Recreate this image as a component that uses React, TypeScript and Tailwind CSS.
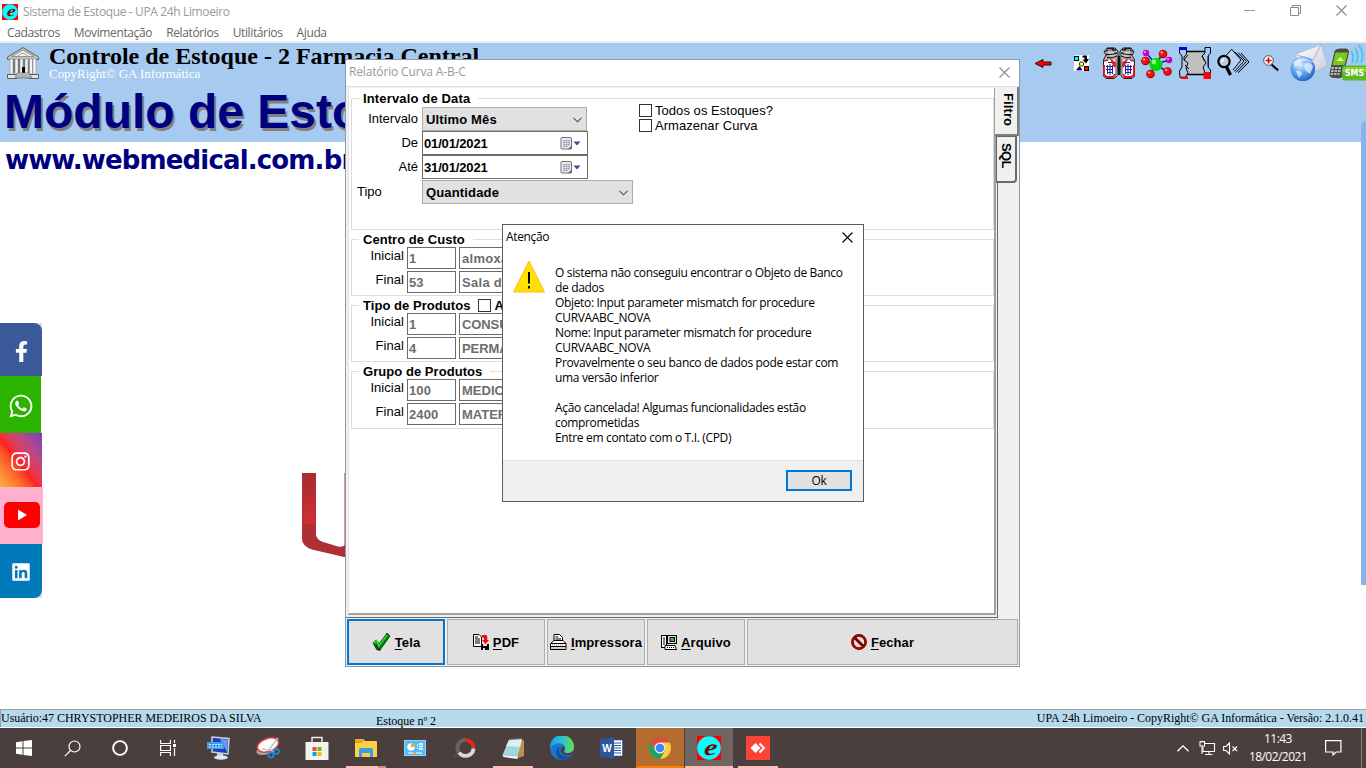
import type { ReactNode } from "react";
import { FaFacebookF, FaWhatsapp, FaInstagram, FaLinkedin } from "react-icons/fa";

const ui = "font-['Open_Sans','Noto_Sans',sans-serif]";
const arial = "font-['Liberation_Sans',Arial,sans-serif]";
const serif = "font-['Liberation_Serif','Times_New_Roman',serif]";

function ELogo({ className }: { className: string }) {
  return (
    <svg className={className} viewBox="0 0 24 24">
      <rect width="24" height="24" fill="#ff0000" />
      <circle cx="12" cy="12" r="11.8" fill="#00ffff" />
      <g transform="translate(12 18.5) skewX(-8) scale(1.45 1.15)">
        <text x="0.6" y="0" textAnchor="middle" fontSize="20" fontWeight="bold" fontStyle="italic" fontFamily="Liberation Serif, serif" fill="#800000">e</text>
      </g>
    </svg>
  );
}

function CloseX({ className, size }: { className: string; size: number }) {
  return (
    <svg className={className} width={size} height={size} viewBox="0 0 11 11" fill="none" stroke="currentColor" strokeWidth="1.1">
      <path d="M0.5 0.5 10.5 10.5M10.5 0.5 0.5 10.5" />
    </svg>
  );
}

function Tool({ children }: { children: ReactNode }) {
  return <svg className="h-10 w-[38px] shrink-0" viewBox="0 0 38 40">{children}</svg>;
}

function Can() {
  return (
    <g fill="none">
      <path d="M7 5H15L18 8V14L17 33 14 35.500H6L3.500 33V17L6 12 4 9Z" fill="#b4b4b4" stroke="#202020" />
      <path d="M7 5.500H14M5 8.500 9 7H16M6 11.500H10L17 10M7 14.500H12L17 13" stroke="#202020" strokeWidth="1.300" />
      <path d="M8 7H12M8 10H14M9 13H14" stroke="#f4f4f4" strokeWidth="0.9" />
      <path d="M4 17H15V33H4Z" fill="#ffffff" />
      <path d="M4 18 8 17M12 18 15 24V20ZM4 22V32L7 34H13L15 31" stroke="#e81010" strokeWidth="1.800" />
      <ellipse cx="9.500" cy="26" rx="4" ry="5" fill="#ffffff" />
      <path d="M8 19.500H12M6 23.500H13M6 26.500H13M7 29.500H13M7.500 22V31M10 21V32M12.500 22V31" stroke="#20209c" strokeWidth="1" />
      <path d="M16.500 16V33" stroke="#8a8a8a" strokeWidth="1.600" />
    </g>
  );
}

function Toolbar() {
  return (
    <div className="ml-auto flex">
      <Tool>
        <path d="M11 20.5 19 16.5V19H27V22H19V24.5Z" fill="#ff0000" stroke="#400000" strokeWidth="1" />
      </Tool>
      <Tool>
        <rect x="12" y="12" width="15" height="16" fill="#ffffff" />
        <rect x="11" y="11" width="7" height="8" fill="#a6caf0" opacity="0.4" />
        <rect x="12.5" y="13.5" width="4" height="4" fill="#00ffff" stroke="#000" />
        <path d="M21 12.500H25V16H27L24 20.500 20.500 16.500H22.500V14.500H20Z" fill="#000" />
        <circle cx="19.5" cy="21" r="2.2" fill="#ffff00" stroke="#000" strokeWidth="0.8" />
        <path d="M14.500 27 17.500 23.500 20 27Z" fill="#0000c0" stroke="#000" strokeWidth="0.7" />
        <rect x="22.5" y="23.5" width="4" height="4" fill="#ff0000" stroke="#000" />
      </Tool>
      <Tool>
        <Can />
        <g transform="translate(38 0) scale(-1 1)"><Can /></g>
        <path d="M19 13V32" stroke="#000" strokeWidth="1.800" />
      </Tool>
      <Tool>
        <path d="M18 21 8 10M18 21 7 18M18 21 25 10M18 21 31 17M18 21 12 31M18 21 29 29" stroke="#2020b0" strokeWidth="1.600" />
        <circle cx="18" cy="21.5" r="6.5" fill="#00d800" /><circle cx="16" cy="19" r="2.4" fill="#80ff80" />
        <circle cx="8" cy="10" r="3.2" fill="#c800c8" /><circle cx="7" cy="9" r="1" fill="#ffa0ff" />
        <circle cx="31" cy="17" r="3.2" fill="#c800c8" /><circle cx="30" cy="16" r="1" fill="#ffa0ff" />
        {[[7.5, 18], [25, 11], [12.5, 31], [29.5, 28.5]].map(([x, y]) => (
          <g key={x}>
            <circle cx={x} cy={y} r="4.3" fill="#a00000" />
            <circle cx={x - 0.3} cy={y - 0.3} r="3.5" fill="#f01010" />
            <circle cx={x - 1.3} cy={y - 1.5} r="1.1" fill="#ffc0c0" />
          </g>
        ))}
      </Tool>
      <Tool>
        <path d="M7 8.500H32V31.500H7Z" fill="#c0c0c0" stroke="#000" strokeWidth="1.4" />
        <path d="M3.500 7V4.500H10.500V11L8 14V17L12 20 10 25 12 30 9 34.500H4L3.500 28 6 24V13L3.500 10Z" fill="#a6caf0" stroke="#000" strokeWidth="1" />
        <path d="M34.500 4.500H29V10L26 13 28 17 30 20 27 24 29 30H34.500V27L32 24V13L34.500 10Z" fill="#a6caf0" stroke="#000" strokeWidth="1" />
        <path d="M8 17 12 12M9 22 13 26M26 13 29 18" stroke="#000" strokeWidth="1" />
        <rect x="3" y="4" width="8" height="3" fill="#0000e0" />
        <rect x="5" y="33.500" width="7" height="2.500" fill="#ff0000" />
        <rect x="27.500" y="29.500" width="7.500" height="6.500" fill="#ff0000" />
      </Tool>
      <Tool>
        <g fill="none" stroke="#000" strokeWidth="1">
          <path d="M12 12.500 17.700 6.300 27 17 19 27" fill="#b8d4f2" />
          <path d="M21 9 30 18 20.500 28.500" />
          <path d="M24 9.500 32.500 18.500 22 29.500" />
          <path d="M27 10 35 19 24 29.800" />
        </g>
        <circle cx="10" cy="18.500" r="5.600" fill="#b9cde0" stroke="#000" strokeWidth="2.2" />
        <path d="M7 19 10 16" stroke="#fff" strokeWidth="1.3" />
        <path d="M12.500 24 16.500 32" stroke="#000" strokeWidth="3.2" />
      </Tool>
      <Tool>
        <path d="M19 21.500 26 27.500" stroke="#000" strokeWidth="2.4" />
        <path d="M18 22 25 28" stroke="#e0e0e0" strokeWidth="0.8" />
        <circle cx="16.500" cy="17.500" r="4.800" fill="#ffffff" stroke="#505050" strokeWidth="1" />
        <path d="M16.500 14.500V20.500M13.500 17.500H19.500" stroke="#e00000" strokeWidth="1.7" />
      </Tool>
      <Tool>
        <defs>
          <radialGradient id="globe" cx="0.4" cy="0.35" r="0.7"><stop offset="0" stopColor="#d9ecff" /><stop offset="0.55" stopColor="#5b9fec" /><stop offset="1" stopColor="#1c5cc0" /></radialGradient>
          <linearGradient id="mail" x1="0" y1="0" x2="1" y2="1"><stop offset="0" stopColor="#ffffff" /><stop offset="1" stopColor="#c9c9da" /></linearGradient>
        </defs>
        <path d="M5 11.500 31 1.500 37.500 23 17 32Z" fill="url(#mail)" stroke="#b8bccb" strokeWidth="0.7" />
        <path d="M5 11.500 23.500 17 31 1.500" fill="none" stroke="#a9adc0" strokeWidth="0.9" />
        <circle cx="12.800" cy="25.700" r="12.300" fill="url(#globe)" />
        <path d="M3 20Q7 16 12 18L10 22 5 24ZM15 20Q22 18 23 24L20 31 16 28 14 24ZM6 28Q10 27 12 31L9 35Z" fill="#e6f2ff" opacity="0.75" />
        <path d="M2.500 20Q12 9 23.500 20Q12 16 2.500 20" fill="#fff" opacity="0.5" />
      </Tool>
      <Tool>
        <path d="M23 8Q27 13 24 20M27 5Q32 13 28 20M31 2Q37 12 33 20" stroke="#3fc5e8" strokeWidth="1.700" fill="none" />
        <path d="M6 8Q7 5.500 11 5H18Q22 6 21.500 10L16 32Q14 36.500 10 36L3 35Q0 33 1 30Z" fill="#4a4d50" stroke="#e3e6e8" strokeWidth="0.8" />
        <path d="M7.500 9.500H20L16.500 22H4.500Z" fill="#7cc81e" /><path d="M8.500 18 12.500 14 15.500 18Z" fill="#e0ffb0" />
        <path d="M3.500 25H13.500M3 28H12.500M2.500 31H11.500" stroke="#dedede" strokeWidth="1.6" strokeDasharray="2.5 1" />
        <rect x="14" y="22.500" width="28" height="15" rx="3" fill="#5cb81f" />
        <path d="M15 26Q16 24 18 24H38V29H15Z" fill="#85d43e" />
        <text x="17" y="33" fontSize="8.500" fontWeight="bold" fontFamily="DejaVu Sans, sans-serif" fill="#fff" textLength="19" lengthAdjust="spacingAndGlyphs">SMS</text>
      </Tool>
    </div>
  );
}

function Temple() {
  return (
    <svg className="mt-1 ml-[7px] h-8 w-8 shrink-0" viewBox="0 0 32 32">
      <path d="M.5 10 16 .5 31.500 10V12.500H.5Z" fill="#c0c0c0" stroke="#606060" strokeWidth="1" />
      <path d="M5 9.500 16 3 27 9.500Z" fill="#efefef" stroke="#808080" strokeWidth="0.8" />
      <path d="M11 9Q16 4 21 9" stroke="#505050" fill="none" strokeDasharray="1 1" />
      <rect x="3" y="13" width="26" height="13" fill="#707070" />
      {[3, 8, 13, 18, 22.5, 26].map((x) => <rect key={x} x={x} y="12" width="3" height="15" fill="#f4f4f4" stroke="#909090" strokeWidth="0.6" />)}
      <path d="M15 20H18V26H15Z" fill="#000" />
      <path d="M.5 27.500H10V31.500H.5ZM22 27.500H31.500V31.500H22Z" fill="#e4e4e4" stroke="#404040" strokeWidth="0.8" />
      <path d="M10 26H22L25 31H8Z" fill="#d8d8d8" stroke="#707070" strokeWidth="0.7" />
      <path d="M9 28H23M9 30H24" stroke="#606060" strokeWidth="0.6" />
    </svg>
  );
}

function Group({ title, height, tracking, extra, children }: { title: string; height: string; tracking: string; extra?: ReactNode; children: ReactNode }) {
  return (
    <fieldset className={`mb-px w-[643px] border border-[#dcdcdc] ${height}`}>
      <legend className={`ml-[7px] flex h-4 items-center pt-px pr-2 pl-1 text-[13px] leading-4 font-bold whitespace-nowrap ${tracking}`}>
        {title}
        {extra}
      </legend>
      {children}
    </fieldset>
  );
}

function Range({ label, code, name, tracking = "" }: { label: string; code: string; name: string; tracking?: string }) {
  return (
    <div className="mb-0.5 flex h-[22px]">
      <span className="mr-[3px] w-[52px] text-right text-[13px] leading-[18px] tracking-[0.05px]">{label}</span>
      <span className="mr-[3px] w-[49px] border border-[#6b6b6b] pl-px text-[13px] leading-[21px] font-bold tracking-[0.1px] text-[#6d6d6d]">{code}</span>
      <span className={`w-[230px] border border-[#6b6b6b] pl-[2px] text-[13px] leading-[21px] font-bold text-[#6d6d6d] ${tracking}`}>{name}</span>
    </div>
  );
}

function Select({ value, width }: { value: string; width: string }) {
  return (
    <div className={`flex h-6 items-center justify-between border border-[#adadad] bg-[#e1e1e1] pt-px pr-1 pl-[3px] text-[13px] font-bold tracking-[0.15px] ${width}`}>
      {value}
      <svg width="9" height="6" viewBox="0 0 9 6" fill="none" stroke="#505050" strokeWidth="1.1"><path d="M.5 .8 4.5 4.8 8.500 .8" /></svg>
    </div>
  );
}

function DateBox({ value }: { value: string }) {
  return (
    <div className="flex h-6 w-[166px] items-center border border-[#6e6e6e] bg-white pl-px text-[13px] font-bold tracking-[-0.15px]">
      <span className="flex-1 pt-0.5">{value}</span>
      <svg className="mr-[6px]" width="21" height="13" viewBox="0 0 21 13">
        <rect x="1" y=".5" width="10.500" height="11.500" rx="1" fill="#e8eaf0" stroke="#746a70" />
        <path d="M3 3.500H10M3 5.500H10M3 7.500H10M3 9.500H8M4 3V10M6.500 3V10M9 3V9" stroke="#9aa3b8" strokeWidth=".8" />
        <path d="M8 12 11.500 9V12Z" fill="#6b5560" />
        <path d="M13.500 4.500H20.500L17 8.500Z" fill="#34508c" />
      </svg>
    </div>
  );
}

function Row({ label, align = "text-right pr-1", children }: { label: string; align?: string; children: ReactNode }) {
  return (
    <div className="flex h-6">
      <span className={`w-[70px] text-[13px] leading-[24px] ${align}`}>{label}</span>
      {children}
    </div>
  );
}

function Check({ label }: { label: string }) {
  return (
    <div className="flex h-[15px] items-center gap-[3px] text-[13px] tracking-[0.05px] whitespace-nowrap">
      <span className="h-[13px] w-[13px] border border-[#333] bg-white" />
      <span className="pt-px">{label}</span>
    </div>
  );
}

function ActionButton({ letter, rest, icon, width, focus = false }: { letter: string; rest: string; icon: ReactNode; width: string; focus?: boolean }) {
  return (
    <button className={`flex h-[46px] items-center justify-center gap-1 bg-[#e1e1e1] text-[13px] font-bold tracking-[0.1px] ${focus ? "border-2 border-[#0078d7]" : "border border-[#adadad]"} ${width}`}>
      {icon}
      <span className="pt-px"><span className="underline underline-offset-2">{letter}</span>{rest}</span>
    </button>
  );
}

function ReportWindow() {
  return (
    <div className={`absolute top-[59px] left-[345px] flex h-[608px] w-[675px] flex-col border border-[#8c9aa8] bg-[#f0f0f0] ${arial} text-black`}>
      <div className={`flex h-[26px] shrink-0 items-center justify-between bg-white pr-[9px] pl-[3px] text-[12px] tracking-[-0.15px] text-[#999] ${ui}`}>
        <span className="-mt-0.5">Relatório Curva A-B-C</span>
        <CloseX size={11} className="-mt-0.5 text-[#8a8a8a]" />
      </div>
      <div className="flex h-[532px] shrink-0 border-t border-[#e0e0e0]">
        <div className="flex w-[652px] flex-col border-r border-b border-[#696969] pt-px pr-px pb-[2px] pl-[2px]">
          <div className="flex-1 border-r-2 border-b-2 border-l border-r-[#a0a0a0] border-b-[#a0a0a0] border-l-[#e3e3e3] bg-white pt-[2px] pl-[2px]">
            <Group title="Intervalo de Data" height="h-[140px]" tracking="tracking-[0.15px]">
              <div className="flex pt-px">
                <div>
                  <Row label="Intervalo"><Select value="Ultimo Mês" width="w-[165px]" /></Row>
                  <Row label="De"><DateBox value="01/01/2021" /></Row>
                  <Row label="Até"><DateBox value="31/01/2021" /></Row>
                  <div className="pt-px"><Row label="Tipo" align="pl-[5px]"><Select value="Quantidade" width="w-[211px]" /></Row></div>
                </div>
                <div className="-mt-[4px] ml-[6px]">
                  <Check label="Todos os Estoques?" />
                  <Check label="Armazenar Curva" />
                </div>
              </div>
            </Group>
            <Group title="Centro de Custo" height="h-[65px]" tracking="tracking-[0.05px]">
              <Range label="Inicial" code="1" name="almoxarifado" tracking="tracking-[0.3px]" />
              <Range label="Final" code="53" name="Sala de Vacina" tracking="tracking-[0.3px]" />
            </Group>
            <Group title="Tipo de Produtos" height="h-[65px]" tracking="tracking-[0.05px]" extra={<><span className="mr-[3px] ml-2 h-[13px] w-[13px] border border-[#333] bg-white" />Ativos</>}>
              <Range label="Inicial" code="1" name="CONSUMO" tracking="tracking-[-0.1px]" />
              <Range label="Final" code="4" name="PERMANENTE" tracking="tracking-[-0.1px]" />
            </Group>
            <Group title="Grupo de Produtos" height="h-[66px]" tracking="tracking-[0.05px]">
              <Range label="Inicial" code="100" name="MEDICAMENTOS" />
              <Range label="Final" code="2400" name="MATERIAL" />
            </Group>
          </div>
        </div>
        <div className="flex flex-1 flex-col items-start text-[13px] font-bold">
          <div className="-ml-[3px] h-[49px] w-6 border-r-2 border-b-2 border-[#808080] bg-[#f0f0f0] pt-[6px] leading-[18px] tracking-[0.1px] [writing-mode:vertical-rl]">Filtro</div>
          <div className="-ml-[2px] h-[47px] w-[21px] rounded-br-sm border-t border-r-2 border-b-2 border-l border-[#696969] bg-[#f0f0f0] pt-[6px] leading-[17px] tracking-[-0.6px] [writing-mode:vertical-rl]">SQL</div>
        </div>
      </div>
      <div className="flex gap-0.5 pt-px pl-px">
        <ActionButton letter="T" rest="ela" width="w-[98px]" focus icon={
          <svg width="19" height="20" viewBox="0 0 19 20"><path d="M1 11 4 8 7 12 15 1 18 4 8 18H5Z" fill="#008000" stroke="#003000" strokeWidth="0.8" /><path d="M2 11 4.500 9 7 14 15 3" stroke="#30d030" strokeWidth="1.8" fill="none" /><path d="M4 13 7 18 8.500 18" stroke="#000080" fill="none" /></svg>} />
        <ActionButton letter="P" rest="DF" width="w-[98px]" icon={
          <svg width="16" height="16" viewBox="0 0 16 16"><path d="M.5 .5H6L8.500 3V12.500H.5Z" fill="#fff" stroke="#000" /><path d="M2 3H5M2 5H7M2 7H7M2 9H7" stroke="#000" /><path d="M9 1H13Q15 2 14 6H16L12.500 10 9 6H11Q12 4 9 3Z" fill="#ff0000" /><path d="M8 10H16V16H8Z" fill="#000" /><path d="M10 10H14V12H10ZM10 14H12V16H10Z" fill="#ddd" /></svg>} />
        <ActionButton letter="I" rest="mpressora" width="w-[98px]" icon={
          <svg width="17" height="16" viewBox="0 0 17 16"><path d="M4 7V.5H9.500L12.500 3.500V7" fill="#fff" stroke="#000" /><path d="M5.500 3H8M5.500 5H11" stroke="#000" /><path d="M4 6.500H13L16 9.500V15.500H.5V9.500Z" fill="#fff" stroke="#000" /><path d="M1 9.500H16M1 12.500H16" stroke="#000" /><path d="M2 11H14" stroke="#ff7070" strokeDasharray="1 1" /><path d="M1 14H16" stroke="#a0a0a0" /></svg>} />
        <ActionButton letter="A" rest="rquivo" width="w-[98px]" icon={
          <svg width="16" height="15" viewBox="0 0 16 15"><rect x=".5" y=".5" width="5" height="12" fill="#fff" stroke="#000" /><path d="M2 3H4M2 5H4M2 7H4M2 9H4" stroke="#000" /><rect x="6.500" y=".5" width="9" height="8" fill="#e0e0e0" stroke="#000" /><rect x="9" y="2.500" width="4.500" height="4" fill="#30c030" stroke="#000" /><path d="M4 10.500H14L15.500 14.500H4Z" fill="#fff" stroke="#000" /><path d="M6 12.500H14" stroke="#000" strokeDasharray="1 1" /></svg>} />
        <ActionButton letter="F" rest="echar" width="w-[271px]" icon={
          <svg width="16" height="16" viewBox="0 0 16 16" fill="none"><circle cx="8" cy="8" r="6.600" stroke="#600000" strokeWidth="2.700" /><circle cx="8" cy="8" r="6.400" stroke="#c00000" strokeWidth="1.400" /><path d="M3.500 3.500 12.500 12.500" stroke="#800000" strokeWidth="2.800" /></svg>} />
      </div>
    </div>
  );
}

const message = [
  "O sistema não conseguiu encontrar o Objeto de Banco",
  "de dados",
  "Objeto: Input parameter mismatch for procedure",
  "CURVAABC_NOVA",
  "Nome: Input parameter mismatch for procedure",
  "CURVAABC_NOVA",
  "Provavelmente o seu banco de dados pode estar com",
  "uma versão inferior",
  "",
  "Ação cancelada! Algumas funcionalidades estão",
  "comprometidas",
  "Entre em contato com o T.I. (CPD)",
];

function AlertWindow() {
  return (
    <div className={`absolute top-[224px] left-[502px] flex h-[278px] w-[362px] flex-col border border-[#5c5c5c] bg-white text-[12px] tracking-[-0.34px] text-black ${ui}`}>
      <div className="flex h-6 items-center justify-between pr-[10px] pl-[3px]">
        <span>Atenção</span>
        <CloseX size={11} className="text-black" />
      </div>
      <div className="flex flex-1">
        <svg className="mt-[11px] ml-[10px] shrink-0" width="32" height="33" viewBox="0 0 32 33">
          <path d="M16 1 31.500 32H.5Z" fill="#ffe000" stroke="#fdbb1c" strokeWidth="1" />
          <path d="M16 12V23.500M16 26V28.500" stroke="#000" strokeWidth="2" />
        </svg>
        <div className="mt-4 ml-[10px] whitespace-nowrap">
          {message.map((line, i) => <div key={i} className="h-[15px] leading-[15px]">{line}</div>)}
        </div>
      </div>
      <div className="flex h-[41px] justify-end border-t border-[#dfdfdf] bg-[#f0f0f0] pt-[9px] pr-[11px]">
        <button className="h-[21px] w-[66px] border-2 border-[#0078d7] bg-[#e1e1e1] leading-[17px]">Ok</button>
      </div>
    </div>
  );
}

function SocialBar() {
  return (
    <div className="absolute top-[323px] left-0 flex flex-col items-start text-white">
      <div className="w-[42px] bg-[#dcdcdc]"><div className="flex h-[53px] items-center justify-center rounded-tr-lg bg-[#3b5998] pt-[3px]"><FaFacebookF size={21} /></div></div>
      <div className="flex h-[57px] w-[41px] items-center justify-center bg-[#2cb300] pt-[3px]"><FaWhatsapp size={26} /></div>
      <div className="flex h-[54px] w-[42px] items-center justify-center bg-linear-to-tr from-[#ffb040] via-[#ff1f20] via-45% to-[#7a3cc0] pt-0.5 pr-px"><FaInstagram size={21} /></div>
      <div className="flex h-[57px] w-[43px] items-center justify-center bg-[#ffb0cc] pb-px">
        <svg width="36" height="26" viewBox="0 0 36 26"><rect width="36" height="26" rx="5" fill="#ff0000" /><path d="M14 7.500 23 13 14 18.500Z" fill="#fff" /></svg>
      </div>
      <div className="w-[42px] bg-[#dcdcdc]"><div className="flex h-[54px] items-center justify-center rounded-br-lg bg-[#007ab9] pt-0.5"><FaLinkedin size={20} /></div></div>
    </div>
  );
}

function Task({ children, bg = "", line = "" }: { children: ReactNode; bg?: string; line?: string }) {
  return (
    <div className={`mr-px flex h-10 w-12 shrink-0 flex-col items-center ${bg}`}>
      <div className="flex h-[38px] items-center pt-0.5">{children}</div>
      <div className={`h-0.5 ${line}`} />
    </div>
  );
}

function Taskbar() {
  return (
    <div className="flex h-10 shrink-0 bg-[#4b3f3d] text-white">
      <div className="flex w-12 items-center justify-center"><svg width="16" height="16" viewBox="0 0 16 16" fill="#fff"><path d="M0 2.200 6.500 1.300V7.500H0ZM7.500 1.100 16 0V7.500H7.500ZM0 8.500H6.500V14.700L0 13.800ZM7.500 8.500H16V16L7.500 14.900Z" /></svg></div>
      <div className="flex w-12 items-center justify-center"><svg width="17" height="17" viewBox="0 0 17 17" fill="none" stroke="#fff" strokeWidth="1.200"><circle cx="10.500" cy="6.500" r="5.500" /><path d="M6.500 10.500 .8 16.200" /></svg></div>
      <div className="flex w-12 items-center justify-center"><svg width="16" height="16" viewBox="0 0 16 16" fill="none" stroke="#fff" strokeWidth="1.900"><circle cx="8" cy="8" r="6.900" /></svg></div>
      <div className="mr-[3px] flex w-12 items-center justify-center"><svg width="17" height="16" viewBox="0 0 17 16" fill="none" stroke="#fff" strokeWidth="1.200"><path d="M.6 0V3.500H10.400V0M.6 16V12.500H10.400V16M.6 5.500H10.400V10.500H.6ZM14.500 0V3M14.500 8V16" /><path d="M13 5.500H16" strokeWidth="3" /></svg></div>
      <Task><svg width="24" height="24" viewBox="0 0 24 24"><path d="M5 1 22 2.500 21 18 5 16Z" fill="#1a3fc0" stroke="#c7cfda" strokeWidth="1.500" /><path d="M13 3 21 3.500 20 16Z" fill="#6f95f0" /><path d="M0 6H17V13H0Z" fill="#3f9de0" /><path d="M2 8.500H15M2 11H15" stroke="#fff" strokeWidth="0.8" strokeDasharray="2 1" /><path d="M10 17H16V20H10Z" fill="#cfd3d8" /><ellipse cx="14" cy="21.500" rx="7" ry="2.200" fill="#e4e6ea" /></svg></Task>
      <Task><svg width="24" height="24" viewBox="0 0 24 24"><ellipse cx="11" cy="13" rx="11" ry="5" transform="rotate(-20 11 13)" fill="#a8a8a8" /><ellipse cx="12" cy="9" rx="11" ry="6.500" transform="rotate(-20 12 9)" fill="#fff" stroke="#e04040" strokeWidth="1.600" /><path d="M22 2 12 15M6 13 19 15" stroke="#c0c4c8" strokeWidth="1.600" /><circle cx="15" cy="19" r="2.600" fill="none" stroke="#1e88d8" strokeWidth="1.800" /><circle cx="20.500" cy="15.500" r="2.400" fill="none" stroke="#1e88d8" strokeWidth="1.800" /></svg></Task>
      <Task><svg width="24" height="24" viewBox="0 0 24 24"><path d="M7 7V1.500H17V7" fill="none" stroke="#f0f0f0" strokeWidth="1.400" /><path d="M.5 6H23.500V24H.5Z" fill="#f2f2f2" /><path d="M7.500 11H11.500V15H7.500Z" fill="#f25022" /><path d="M12.500 11H16.500V15H12.500Z" fill="#7fba00" /><path d="M7.500 16H11.500V20H7.500Z" fill="#00a4ef" /><path d="M12.500 16H16.500V20H12.500Z" fill="#ffb900" /></svg></Task>
      <Task line="w-10 border-r-8 border-[#c99184] bg-[#fbbfb3]"><svg width="22" height="20" viewBox="0 0 22 20"><path d="M0 2Q0 1 1 1H8L10 3H21Q22 3 22 4V19H0Z" fill="#ffcf48" /><path d="M0 1.500H8V5H0Z" fill="#e8a317" /><path d="M4 19V11.500Q4 10 5.500 10H16.500Q18 10 18 11.500V19H15V15H7V19Z" fill="#3b9be6" /></svg></Task>
      <Task><svg width="22" height="17" viewBox="0 0 22 17"><rect x=".5" y=".5" width="21" height="15" fill="#59b9f2" stroke="#8ed4fb" /><circle cx="7" cy="7" r="3.800" fill="#fff" /><path d="M7 7V3.200A3.800 3.800 0 0 1 10.800 7Z" fill="#f7a521" /><path d="M13 5H14M13 8H14M15 4H19M15 6.500H19M15 9H19" stroke="#fff" strokeWidth="1.500" /><path d="M4 13H18" stroke="#fff" /><path d="M9 13H12" stroke="#f7a521" strokeWidth="2" /></svg></Task>
      <Task><svg width="24" height="22" viewBox="0 0 24 22" fill="none" strokeWidth="3.800"><path d="M6 16 1.500 20.500" stroke="#4a4a4a" strokeWidth="3.500" /><path d="M13.500 3A8 8 0 0 0 6.500 15" stroke="#656565" /><path d="M13.500 3A8 8 0 0 1 21.500 11" stroke="#e8281f" /><path d="M21.500 11.500A8 8 0 0 1 7 15.500" stroke="#dadada" /></svg></Task>
      <Task line="w-10 bg-[#fbbfb3]"><svg width="23" height="23" viewBox="0 0 23 23"><path d="M18 4 22 3V19L16 21Z" fill="#b99545" /><path d="M7 3 20 2 16 19 .5 18Z" fill="#a5d5e0" /><path d="M7 3 20 2 18 10 4 9Z" fill="#d9eff2" /><path d="M.5 18 16 19 15.500 22 1.500 20Z" fill="#e8f4f5" /><path d="M7 2.500 20 1.500" stroke="#7a8588" strokeWidth="1.500" strokeDasharray="1 1" /></svg></Task>
      <Task><svg width="24" height="24" viewBox="0 0 24 24"><defs><linearGradient id="edge" x1="0" x2="1"><stop offset="0" stopColor="#1d9be8" /><stop offset=".5" stopColor="#2ac3d0" /><stop offset="1" stopColor="#67dc4c" /></linearGradient></defs><circle cx="12" cy="12" r="12" fill="#1b78d0" /><path d="M0 11A12 12 0 0 1 24 11Q24 17 17.500 17 14 17 14 15 16 13 15 10.500 12.500 6.500 7 7.500 2 8.500 0 12Z" fill="url(#edge)" /><path d="M9.500 10.500Q7 19 16 20.500 19.500 21 22 18 18 24 12 24 6 22.500 6 16 7 11.500 9.500 10.500Z" fill="#1450a0" /><path d="M14 15Q14 17.300 17.500 17.300 21.500 17.300 23.500 14L23 17.500Q20 19.500 17 19.500 12 19 10.500 14.500 10.500 10.500 13.500 10.500 16 12.500 14 15Z" fill="#4b3f3d" /></svg></Task>
      <Task><svg width="23" height="22" viewBox="0 0 23 22"><path d="M13 3H22.500V19H13Z" fill="#fff" stroke="#2b579a" strokeWidth=".6" /><path d="M14 6H21M14 8.500H21M14 11H21M14 13.500H21M14 16H21" stroke="#2b579a" strokeWidth="1.200" /><path d="M0 2.500 14 0V22L0 19.500Z" fill="#2b579a" /><text x="7" y="14.500" textAnchor="middle" fontSize="10" fontWeight="bold" fontFamily="Liberation Sans, sans-serif" fill="#fff">W</text></svg></Task>
      <Task bg="bg-[#b56c31]" line="w-12 bg-[#ff7a00]"><svg width="22" height="22" viewBox="0 0 22 22"><path d="M11 11 1.500 5.500A11 11 0 0 1 20.500 5.500H11Z" fill="#dd4b3e" /><path d="M20.500 5.500A11 11 0 0 1 11 22L15.800 13.800 15.800 8.500 11 5.500Z" fill="#ffcd40" /><path d="M1.500 5.500A11 11 0 0 0 11 22L15.800 13.800H11L6.200 13.800Z" fill="#1da362" /><circle cx="11" cy="11" r="5.500" fill="#f2f2f2" /><circle cx="11" cy="11" r="4.300" fill="#4285f4" /></svg></Task>
      <Task bg="bg-[#706563]" line="w-12 bg-[#fbbfb3]"><ELogo className="h-6 w-6" /></Task>
      <Task line="w-10 bg-[#fbbfb3]"><svg width="24" height="24" viewBox="0 0 24 24"><rect width="24" height="24" fill="#fb4436" /><path d="M9.500 7 14.500 12 9.500 17 4.500 12Z" fill="#fff" /><path d="M13.500 7.500 18 12 13.500 16.500" fill="none" stroke="#fff" strokeWidth="2" /></svg></Task>
      <div className={`ml-auto flex items-center ${ui}`}>
        <svg width="12" height="7" viewBox="0 0 12 7" fill="none" stroke="#fff" strokeWidth="1.300"><path d="M.5 6.300 6 .8 11.500 6.300" /></svg>
        <svg className="ml-[10px]" width="17" height="15" viewBox="0 0 17 15" fill="none" stroke="#fff" strokeWidth="1.100"><path d="M6 2.500H15.500V10.500H4V6M10 10.500V13.500M6 13.500H13.500" /><path d="M1 .6H5.500V5H1ZM3 5V13" /></svg>
        <svg className="ml-[7px]" width="15" height="13" viewBox="0 0 15 13" fill="none" stroke="#fff" strokeWidth="1.100"><path d="M.6 4.500H3L6.500 1V12L3 8.500H.6ZM9.500 4.500 14 9M14 4.500 9.500 9" /></svg>
        <div className="ml-[10px] w-[60px] text-center text-[12px] leading-[18px] tracking-[-0.55px] whitespace-nowrap"><div>11:43</div><div>18/02/2021</div></div>
        <svg className="ml-[17px]" width="17" height="16" viewBox="0 0 17 16" fill="none" stroke="#fff" strokeWidth="1.200"><path d="M.6 .6H15.900V12H11L8 15 8 12H.6Z" /></svg>
        <div className="ml-[19px] h-10 w-[5px] border-l border-[#8b827f]" />
      </div>
    </div>
  );
}

export default function App() {
  return (
    <div className="relative flex h-[768px] w-[1366px] flex-col overflow-hidden bg-white">
      <div className={`flex h-6 shrink-0 items-center pl-[2px] text-[12px] tracking-[-0.37px] text-[#999] ${ui}`}>
        <ELogo className="h-4 w-4" />
        <span className="ml-[5px]">Sistema de Estoque - UPA 24h Limoeiro</span>
        <div className="mr-[19px] ml-auto flex items-center gap-[35px] pb-1">
          <svg width="11" height="11" viewBox="0 0 11 11"><path d="M0 5.500H11" stroke="#999" /></svg>
          <svg width="11" height="11" viewBox="0 0 11 11" fill="none" stroke="#8a8a8a"><path d="M.5 2.500H8.500V10.500H.5ZM2.500 2.500V.5H10.500V8.500H8.500" /></svg>
          <CloseX size={11} className="text-[#8a8a8a]" />
        </div>
      </div>
      <div className={`flex h-[17px] shrink-0 gap-[14px] pl-[7px] text-[12px] leading-[18px] tracking-[-0.37px] text-[#666] ${ui}`}>
        <span>Cadastros</span><span>Movimentação</span><span>Relatórios</span><span>Utilitários</span><span>Ajuda</span>
      </div>
      <div className="h-0.5 shrink-0 bg-[#eeeeee]" />
      <div className="h-[99px] shrink-0 bg-[#a6caf0]">
        <div className="flex h-10">
          <Temple />
          <div className={`ml-[10px] whitespace-nowrap ${serif}`}>
            <div className="h-6 text-[24px] leading-[27px] font-bold text-black">Controle de Estoque - 2 Farmacia Central</div>
            <div className="text-[13px] leading-[14px] tracking-[-0.04px] text-white">CopyRight© GA Informática</div>
          </div>
          <Toolbar />
        </div>
        <div className={`pl-[4px] text-[48px] leading-[57px] font-bold whitespace-nowrap text-[#000080] [text-shadow:2px_3px_0_#808080] ${arial}`}>Módulo de Estoque</div>
      </div>
      <div className="flex-1">
        <div className="pt-px pl-[5px] font-['DejaVu_Sans',Verdana,sans-serif] text-[26px] leading-[34px] font-bold tracking-[-0.85px] whitespace-nowrap text-[#000080]">www.webmedical.com.br</div>
      </div>
      <div className={`flex h-[19px] shrink-0 border-t border-b border-t-[#a0a0a0] border-b-white bg-[#b5daec] text-[12px] leading-[16px] tracking-[-0.03px] whitespace-nowrap text-black ${serif}`}>
        <span className="w-[374px] border-l border-[#a0a0a0]">Usuário:47 CHRYSTOPHER MEDEIROS DA SILVA</span>
        <span className="pt-[3px] pl-[2px]">Estoque nº 2</span>
        <span className="ml-auto pr-[2px]">UPA 24h Limoeiro - CopyRight© GA Informática - Versão: 2.1.0.41</span>
      </div>
      <Taskbar />

      <svg className="absolute top-[473px] left-[302px]" width="60" height="86" viewBox="0 0 60 86">
        <defs><linearGradient id="u" x1="0" y1="0" x2="0" y2="1"><stop offset="0" stopColor="#a92a2f" /><stop offset="1" stopColor="#d03035" /></linearGradient></defs>
        <path d="M0 0H14V62Q15 67 21 69L36 73.500Q41 74.500 42.500 72V0H58V84H42L10 76.500Q0 73 0 66Z" fill="#ae2f34" />
        <path d="M1 0H13V50L1 52Z" fill="url(#u)" />
      </svg>
      <div className="absolute top-[121px] left-[1361px] h-[464px] w-[5px] rounded-tl-[5px] bg-[#85b5ec]" />
      <SocialBar />
      <ReportWindow />
      <AlertWindow />
    </div>
  );
}
